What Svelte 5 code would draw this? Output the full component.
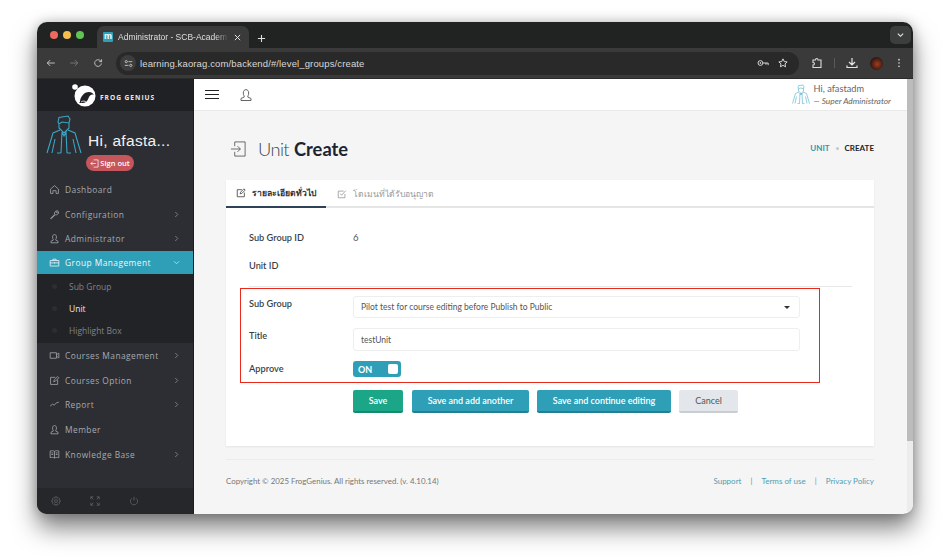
<script>
  const nav = [
    { label: "Dashboard", icon: "home" },
    { label: "Configuration", icon: "wrench", arrow: true },
    { label: "Administrator", icon: "user", arrow: true },
    { label: "Group Management", icon: "case", open: true },
    { label: "Courses Management", icon: "video", arrow: true },
    { label: "Courses Option", icon: "edit", arrow: true },
    { label: "Report", icon: "chart", arrow: true },
    { label: "Member", icon: "user" },
    { label: "Knowledge Base", icon: "book", arrow: true },
  ];
  const subs = ["Sub Group", "Unit", "Highlight Box"];
</script>

{#snippet person(cls)}
  <svg class={cls} viewBox="0 0 36 40" fill="none" stroke="#3aa6c4" stroke-width="1.1">
    <path d="M12 7 L13 2.500 L22 1 L24 4 L23 8 L16 7 L13 9 Z M13 9 V13 L18 18 L23 13 V8" />
    <path d="M14 15 L7 18 L1 38 M22 15 L29 18 L35 38 M16 17 L18 21 L20 17 L21 38 M16 17 L15 38 M9 24 L6 38 M27 24 L30 38 M11 38 H15 M21 38 H25" />
  </svg>
{/snippet}

{#snippet navIcon(name)}
  <svg class="nav-icon" viewBox="0 0 14 14" fill="none" stroke="currentColor" stroke-width="1">
    {#if name === "home"}
      <path d="M2 6.500 7 2l5 4.500V12H9V8.500H5V12H2Z" />
    {:else if name === "wrench"}
      <path d="M2 12 7 6.800C6.400 4.500 8 2 11 2.200L9.300 4.200 10.300 5.200 12.300 3.500C12.600 6.300 10 8 7.900 7.400L3 12.500Z" />
    {:else if name === "user"}
      <path d="M4.500 5c0-4 5-4 5 0 0 2-1 3-1 4l3 1.500V12.500H2.500V10.500L5.500 9c0-1-1-2-1-4Z" />
    {:else if name === "case"}
      <path d="M1.500 4.500H12.500V11.500H1.500ZM5 4.500V2.800H9V4.500M1.500 7.500H12.500M7 6.800V8.200" />
    {:else if name === "video"}
      <path d="M1.500 3.500H9.500V10.500H1.500ZM9.500 6 12.500 4V10L9.500 8" />
    {:else if name === "edit"}
      <path d="M8 3H2V12H11V6M6 8.500 6.500 6.500 11 2 12.500 3.500 8 8Z" />
    {:else if name === "chart"}
      <path d="M1.500 9 4.500 6.500 6.500 7.800 9.500 5 12.500 4" />
    {:else}
      <path d="M1.500 2.500C3.500 2 5.500 2 7 3 8.500 2 10.500 2 12.500 2.500V11C10.500 10.500 8.500 10.500 7 11.500 5.500 10.500 3.500 10.500 1.500 11ZM7 3V11.500M3 5H5.500M3 7H5.500M8.500 5H11M8.500 7H11" />
    {/if}
  </svg>
{/snippet}

{#snippet navRow(item)}
  <div class="nav-row" class:active={item.open}>
    {@render navIcon(item.icon)}
    <span class="nav-label">{item.label}</span>
    {#if item.arrow}
      <svg class="chev" viewBox="0 0 6 8" fill="none" stroke="currentColor"><path d="M1.500 1 4.500 4 1.500 7" /></svg>
    {:else if item.open}
      <svg class="chev" viewBox="0 0 8 6" fill="none" stroke="currentColor"><path d="M1 1.500 4 4.500 7 1.500" /></svg>
    {/if}
  </div>
{/snippet}

<div class="page">
  <div class="window">
    <div class="tabstrip">
      <div class="lights">
        <i class="red"></i><i class="yellow"></i><i class="green"></i>
      </div>
      <div class="tab">
        <span class="favicon">m</span>
        <span class="tab-title">Administrator - SCB-Academ</span>
        <svg class="tab-x" viewBox="0 0 8 8" stroke="#e8e8e8" stroke-width="1.100"><path d="M1 1 7 7M7 1 1 7" /></svg>
      </div>
      <svg class="tab-plus" viewBox="0 0 10 10" stroke="#e0e0e0" stroke-width="1.200"><path d="M5 1V9M1 5H9" /></svg>
      <div class="tab-menu">
        <svg viewBox="0 0 8 6" fill="none" stroke="#e8e8e8" stroke-width="1.300"><path d="M1 1.500 4 4.500 7 1.500" /></svg>
      </div>
    </div>

    <div class="toolbar">
      <svg class="tool" viewBox="0 0 12 12" fill="none" stroke="#c8c8c8" stroke-width="1.100"><path d="M10.500 6H1.500M5 2.500 1.500 6 5 9.500" /></svg>
      <svg class="tool fwd" viewBox="0 0 12 12" fill="none" stroke="#7c7c7c" stroke-width="1.100"><path d="M1.500 6H10.500M7 2.500 10.500 6 7 9.500" /></svg>
      <svg class="tool" viewBox="0 0 12 12" fill="none" stroke="#c8c8c8" stroke-width="1.100"><path d="M10 6.500A4 4 0 1 1 8.800 3.200L10.300 4.400M10.300 1.500V4.400H7.500" /></svg>
      <div class="omnibox">
        <span class="tune">
          <svg viewBox="0 0 12 12" fill="none" stroke="#dcdcdc"><circle cx="3" cy="3.500" r="1.500" /><path d="M6 3.500H11M1 8.500H6" /><circle cx="9" cy="8.500" r="1.500" /></svg>
        </span>
        <span class="url">learning.kaorag.com/backend/#/level_groups/create</span>
        <svg class="omni-icon key" viewBox="0 0 14 10" fill="none" stroke="#dcdcdc" stroke-width="1.100"><circle cx="4" cy="5" r="2.800" /><circle cx="4" cy="5" r=".6" /><path d="M6.800 5H13V7.500M10.500 5V7" /></svg>
        <svg class="omni-icon" viewBox="0 0 12 12" fill="none" stroke="#e4e4e4" stroke-width="1.100"><path d="M6 1 7.500 4.300 11 4.700 8.400 7 9.100 10.600 6 8.800 2.900 10.600 3.600 7 1 4.700 4.500 4.300Z" /></svg>
      </div>
      <svg class="tool ext" viewBox="0 0 12 12" fill="none" stroke="#dcdcdc" stroke-width="1.100"><path d="M2 3H4.500C4.500 1 7 1 7 3H10V10.500H2V8C4 8 4 5.500 2 5.500Z" /></svg>
      <span class="tool-sep"></span>
      <svg class="tool dl" viewBox="0 0 12 12" fill="none" stroke="#e4e4e4" stroke-width="1.200"><path d="M6 1V7.500M3 5 6 8 9 5M1 8.500V10.500H11V8.500" /></svg>
      <span class="avatar"></span>
      <svg class="tool dots" viewBox="0 0 4 12" fill="#dcdcdc"><circle cx="2" cy="2" r="1" /><circle cx="2" cy="6" r="1" /><circle cx="2" cy="10" r="1" /></svg>
    </div>

    <div class="app">
      <aside class="sidebar">
        <div class="brand">
          <svg class="frog" viewBox="0 0 26 26">
            <circle cx="4" cy="5" r="2.800" fill="#fff" />
            <circle cx="14" cy="14" r="10.500" fill="#fff" />
            <path d="M9 20C9 15 13 10 18 10 20 10 22 11 23 13 21 12 19 13 18 15 17 18 15 21 12 21H8Z" fill="#1f2125" />
            <path d="M10 20C12 18.500 14 19 15 20" fill="none" stroke="#fff" stroke-width=".8" />
          </svg>
          <span class="brand-name">FROG GENIUS</span>
        </div>

        <div class="profile">
          {@render person("profile-pic")}
          <div class="profile-text">
            <div class="hi">Hi, afasta...</div>
            <div class="signout">
              <svg viewBox="0 0 10 10" fill="none" stroke="#fff" stroke-width=".8"><path d="M4 1H9V9H4M6.500 5H1M3 3 1 5 3 7" /></svg>
              Sign out
            </div>
          </div>
        </div>

        <nav class="nav">
          {#each nav as item}
            {@render navRow(item)}
            {#if item.open}
              <div class="subnav">
                {#each subs as sub}
                  <div class="sub-row" class:current={sub === "Unit"}>
                    <i></i>{sub}
                  </div>
                {/each}
              </div>
            {/if}
          {/each}
        </nav>

        <div class="side-foot">
          <svg viewBox="0 0 12 12" fill="none" stroke="#5d6066"><circle cx="6" cy="6" r="1.800" /><path d="M5 1H7L7.400 2.500 8.800 1.900 10.100 3.200 9.500 4.600 11 5V7L9.500 7.400 10.100 8.800 8.800 10.100 7.400 9.500 7 11H5L4.600 9.500 3.200 10.100 1.900 8.800 2.500 7.400 1 7V5L2.500 4.600 1.900 3.200 3.200 1.900 4.600 2.500Z" /></svg>
          <svg viewBox="0 0 12 12" fill="none" stroke="#5d6066"><path d="M1 4V1H4M8 1H11V4M11 8V11H8M4 11H1V8M1 1 4 4M11 1 8 4M11 11 8 8M1 11 4 8" /></svg>
          <svg viewBox="0 0 12 12" fill="none" stroke="#5d6066"><path d="M6 1V5.500M3.500 2.800A4.300 4.300 0 1 0 8.500 2.800" /></svg>
        </div>
      </aside>

      <div class="main">
        <div class="column">
          <header class="topbar">
            <div class="burger"><i></i><i></i><i></i></div>
            <svg class="top-user" viewBox="0 0 14 14" fill="none" stroke="#555" stroke-width=".9"><path d="M4.300 5c0-4.500 5.400-4.500 5.400 0 0 2-1 3-1 4l3.300 1.500V12.500H2V10.500L5.300 9c0-1-1-2-1-4Z" /></svg>
            <div class="top-right">
              {@render person("top-pic")}
              <div>
                <div class="top-name">Hi, afastadm</div>
                <div class="top-role">— Super Administrator</div>
              </div>
            </div>
          </header>

          <div class="content">
            <div class="title-row">
              <svg class="title-icon" viewBox="0 0 18 18" fill="none" stroke="#555" stroke-width=".9"><path d="M5 6V1.500H16V16.500H5V12M1 9H11M8 6 11 9 8 12" /></svg>
              <h1><span>Unit</span> <b>Create</b></h1>
              <div class="crumbs"><span class="link">UNIT</span><i></i><span>CREATE</span></div>
            </div>

            <section class="card">
              <div class="tabs">
                <div class="form-tab on">
                  <svg viewBox="0 0 12 12" fill="none" stroke="#444"><path d="M7 2H1.500V10.500H10V5.500M5 7 5.500 5 9.500 1 11 2.500 7 6.500Z" /></svg>
                  รายละเอียดทั่วไป
                </div>
                <div class="form-tab">
                  <svg viewBox="0 0 12 12" fill="none" stroke="#999"><path d="M9.500 6V10.500H1.500V2.500H8M3.800 5.500 5.500 7.500 10.500 2" /></svg>
                  โดเมนที่ได้รับอนุญาต
                </div>
              </div>

              <div class="form">
                <div class="static"><label>Sub Group ID</label><span>6</span></div>
                <div class="static"><label>Unit ID</label><span></span></div>
                <hr />
                <div class="marked">
                  <div class="field">
                    <label>Sub Group</label>
                    <div class="control select">
                      <span>Pilot test for course editing before Publish to Public</span>
                      <i class="caret"></i>
                    </div>
                  </div>
                  <div class="field">
                    <label>Title</label>
                    <div class="control">testUnit</div>
                  </div>
                  <div class="field toggle-field">
                    <label>Approve</label>
                    <div class="toggle"><span>ON</span><i></i></div>
                  </div>
                </div>
                <div class="actions">
                  <button class="btn green">Save</button>
                  <button class="btn teal add">Save and add another</button>
                  <button class="btn teal cont">Save and continue editing</button>
                  <button class="btn grey">Cancel</button>
                </div>
              </div>
            </section>

            <footer class="foot">
              <span>Copyright © 2025 FrogGenius. All rights reserved. (v. 4.10.14)</span>
              <div class="foot-links">
                <a href="#support">Support</a><em>|</em><a href="#terms">Terms of use</a><em>|</em><a href="#privacy">Privacy Policy</a>
              </div>
            </footer>
          </div>
        </div>
        <div class="scrollbar"><i></i></div>
      </div>
    </div>
  </div>
</div>

<style>
  :global(body) {
    margin: 0;
    background: #fff;
  }

  .page {
    box-sizing: border-box;
    height: 560px;
    padding: 22px 0 0 37px;
    overflow: hidden;
  }

  .window {
    box-sizing: border-box;
    width: 876px;
    height: 492px;
    display: flex;
    flex-direction: column;
    overflow: hidden;
    border-radius: 10px;
    background: #f5f5f5;
    box-shadow: 0 14px 24px rgba(0, 0, 0, 0.5), 0 0 12px rgba(0, 0, 0, 0.22);
    font-family: Lato, "Noto Sans", sans-serif;
  }

  /* browser chrome */
  .tabstrip {
    height: 26px;
    flex: none;
    display: flex;
    align-items: flex-end;
    background: #212323;
  }
  .lights {
    display: flex;
    gap: 5px;
    align-self: flex-start;
    margin: 9px 0 0 13px;
  }
  .lights i {
    width: 8px;
    height: 8px;
    border-radius: 50%;
  }
  .red { background: #ee6a5f; }
  .yellow { background: #f5bd4f; }
  .green { background: #61c454; }
  .tab {
    width: 152px;
    height: 22px;
    margin-left: 13px;
    box-sizing: border-box;
    padding: 0 6px;
    display: flex;
    align-items: center;
    gap: 5px;
    background: #3a3a3a;
    border-radius: 7px 7px 0 0;
    color: #dfdfdf;
    font: 8.5px "Liberation Sans", sans-serif;
  }
  .favicon {
    flex: none;
    width: 10px;
    height: 10px;
    border-radius: 1px;
    background: #2e9fb7;
    color: #fff;
    font: bold 9px/9px "Liberation Sans", sans-serif;
    text-align: center;
  }
  .tab-title {
    flex: 1;
    white-space: nowrap;
    mask-image: linear-gradient(to right, #000 88%, transparent);
  }
  .tab-x {
    flex: none;
    width: 7px;
    height: 7px;
    margin-right: 2px;
  }
  .tab-plus {
    width: 9px;
    height: 9px;
    margin: 0 0 5px 8px;
  }
  .tab-menu {
    margin: 0 2px 4px auto;
    width: 21px;
    height: 18px;
    display: flex;
    align-items: center;
    justify-content: center;
    border-radius: 5px;
    background: #3c3d3d;
  }
  .tab-menu svg { width: 7px; height: 6px; }

  .toolbar {
    height: 31px;
    flex: none;
    display: flex;
    align-items: center;
    background: #3a3a3a;
    padding-left: 9px;
    border-bottom: 1px solid #2b2b2b;
    box-sizing: border-box;
  }
  .tool {
    width: 10px;
    height: 10px;
    flex: none;
    margin-right: 13px;
  }
  .tool.fwd { margin-right: 14px; }
  .omnibox {
    width: 683px;
    height: 23px;
    flex: none;
    display: flex;
    align-items: center;
    background: #292929;
    border-radius: 12px;
    box-sizing: border-box;
    padding: 0 11px 0 4px;
  }
  .tune {
    width: 16px;
    height: 16px;
    border-radius: 50%;
    background: #3d3d3d;
    display: flex;
    align-items: center;
    justify-content: center;
    margin-right: 4px;
  }
  .tune svg { width: 9px; height: 9px; }
  .url {
    flex: 1;
    color: #d8d8d8;
    font: 9.5px "Liberation Sans", sans-serif;
    letter-spacing: 0.13px;
  }
  .omni-icon {
    width: 10px;
    height: 10px;
    margin-left: 9px;
  }
  .omni-icon.key { width: 12px; }
  .tool.ext {
    width: 12px;
    height: 12px;
    margin: 0 11px 0 12px;
  }
  .tool-sep {
    width: 1px;
    height: 10px;
    background: #5a5a5a;
    margin-right: 11px;
  }
  .tool.dl {
    width: 12px;
    height: 12px;
    margin-right: 12px;
  }
  .avatar {
    width: 13px;
    height: 13px;
    flex: none;
    border-radius: 50%;
    background: radial-gradient(circle at 55% 55%, #a33c1c, #2a1613 70%);
    margin-right: 14px;
  }
  .tool.dots { width: 4px; margin: 0; }

  /* application */
  .app {
    flex: 1;
    display: flex;
    min-height: 0;
  }
  .sidebar {
    width: 157px;
    flex: none;
    box-sizing: border-box;
    display: flex;
    flex-direction: column;
    background: #2c2e33;
    border-right: 1px solid #1b1c1f;
    font-family: "Open Sans", sans-serif;
  }
  .brand {
    height: 32px;
    flex: none;
    display: flex;
    align-items: center;
    padding-left: 34px;
    background: #1f2125;
    gap: 3px;
  }
  .frog { width: 26px; height: 26px; }
  .brand-name {
    color: #e8e8e8;
    font: bold 6.6px "Open Sans", sans-serif;
    letter-spacing: 0.98px;
    margin-top: 5px;
  }
  .profile {
    height: 66px;
    flex: none;
    box-sizing: border-box;
    display: flex;
    padding: 4px 0 0 9px;
    gap: 6px;
  }
  .profile-pic {
    width: 36px;
    height: 40px;
    flex: none;
  }
  .profile-text { padding-top: 16px; }
  .hi {
    color: #f2f2f2;
    font: 15.5px/20px "Liberation Sans", sans-serif;
    white-space: nowrap;
    letter-spacing: 0.3px;
  }
  .signout {
    width: 48px;
    height: 16px;
    margin: 4px 0 0 -2px;
    display: flex;
    align-items: center;
    justify-content: center;
    gap: 1px;
    border-radius: 8px;
    background: #c5565b;
    color: #fff;
    font: 600 7.5px "Open Sans", sans-serif;
    white-space: nowrap;
  }
  .signout svg { width: 9px; height: 9px; }
  .nav { flex: 1; }
  .nav-row {
    height: 24.700px;
    display: flex;
    align-items: center;
    padding: 0 10px 0 12px;
    color: #a7aab0;
    font-size: 8.400px;
    letter-spacing: 0.45px;
  }
  .nav-row.active {
    background: #2f9fb8;
    color: #f2f6f8;
    height: 23px;
  }
  .nav-icon {
    width: 11px;
    height: 11px;
    flex: none;
    margin-right: 5px;
  }
  .nav-label { flex: 1; white-space: nowrap; }
  .chev {
    width: 5px;
    height: 7px;
    margin-right: 4px;
    opacity: 0.75;
  }
  .active .chev { width: 7px; height: 5px; margin-right: 3px; }
  .subnav {
    background: #212327;
    padding-top: 1px;
    height: 69px;
    box-sizing: border-box;
  }
  .sub-row {
    height: 22px;
    display: flex;
    align-items: center;
    color: #80848a;
    font-size: 8.500px;
    padding-left: 15px;
  }
  .sub-row i {
    width: 5px;
    height: 5px;
    border-radius: 50%;
    background: #2c2e33;
    margin-right: 12px;
  }
  .sub-row.current { color: #e8e8e8; }
  .side-foot {
    height: 26px;
    flex: none;
    display: flex;
    align-items: center;
    gap: 29px;
    padding-left: 14px;
    background: #25272b;
  }
  .side-foot svg { width: 10px; height: 10px; }

  .main {
    flex: 1;
    min-width: 0;
    display: flex;
  }
  .column {
    flex: 1;
    min-width: 0;
    display: flex;
    flex-direction: column;
  }
  .scrollbar {
    width: 6px;
    flex: none;
    background: #ececec;
  }
  .scrollbar i {
    display: block;
    height: 362px;
    background: #bcbcbc;
  }
  .topbar {
    height: 32px;
    flex: none;
    display: flex;
    align-items: center;
    background: #fff;
    border-bottom: 1px solid #e9e9e9;
    box-sizing: border-box;
    padding: 0 16px 0 11px;
  }
  .burger {
    width: 14px;
    display: flex;
    flex-direction: column;
    gap: 2.500px;
  }
  .burger i { height: 1.500px; background: #222; }
  .top-user {
    width: 14px;
    height: 14px;
    margin-left: 20px;
  }
  .top-right {
    margin-left: auto;
    display: flex;
    align-items: center;
    gap: 4px;
    color: #666;
  }
  .top-pic { width: 18px; height: 21px; }
  .top-name { font-size: 9.200px; line-height: 12px; }
  .top-role { font-size: 8.400px; font-style: italic; line-height: 12px; }

  .content {
    flex: 1;
    min-height: 0;
    padding: 0 33px 0 32px;
  }
  .title-row {
    height: 69px;
    display: flex;
    align-items: center;
    padding-top: 7px;
    box-sizing: border-box;
  }
  .title-icon {
    width: 17px;
    height: 18px;
    margin: 0 11px 0 4px;
  }
  h1 {
    margin: 0;
    font-size: 18.300px;
    font-weight: 300;
    color: #3a4450;
  }
  h1 span { letter-spacing: -0.6px; }
  h1 b { font-weight: 700; color: #1b2433; }
  .crumbs {
    margin: 0 0 2px auto;
    display: flex;
    align-items: center;
    font-size: 8px;
    font-weight: 700;
    color: #222;
    gap: 6px;
  }
  .crumbs .link { color: #2f97b0; }
  .crumbs i {
    width: 3px;
    height: 3px;
    border-radius: 50%;
    background: #c8c8c8;
  }

  .card {
    height: 266px;
    background: #fff;
    box-shadow: 0 1px 2px rgba(0, 0, 0, 0.07);
  }
  .tabs {
    height: 28px;
    display: flex;
    box-sizing: border-box;
    border-bottom: 2px solid #e5e5e5;
  }
  .form-tab {
    height: 28px;
    box-sizing: border-box;
    display: flex;
    align-items: center;
    gap: 6px;
    padding: 0 11px;
    color: #999;
    font: 8.600px "Noto Sans", "DejaVu Sans", sans-serif;
    white-space: nowrap;
  }
  .form-tab.on {
    width: 100px;
    padding: 0 10px;
    color: #333;
    font-weight: 700;
    border-bottom: 2px solid #2f4358;
  }
  .form-tab svg { width: 10px; height: 10px; flex: none; }

  .form {
    padding: 15px 22px 0 14px;
    color: #333;
    font-size: 9.500px;
  }
  label {
    display: block;
    width: 104px;
    flex: none;
    font-weight: 600;
    color: #3a3f47;
    font-size: 9.200px;
  }
  .static {
    height: 28px;
    display: flex;
    align-items: center;
    padding-left: 9px;
    color: #555;
  }
  hr {
    margin: 7px 0 0 9px;
    border: 0;
    border-top: 1px solid #e8e8e8;
  }
  .marked {
    margin-top: 1px;
    width: 580px;
    height: 95px;
    box-sizing: border-box;
    border: 1.500px solid #e8291c;
    padding: 7px 0 0 8px;
  }
  .field {
    display: flex;
    margin-bottom: 10px;
  }
  .field label { padding-top: 2px; }
  .control {
    width: 447px;
    height: 23px;
    box-sizing: border-box;
    display: flex;
    align-items: center;
    padding: 0 7px;
    border: 1px solid #eeeeee;
    border-radius: 3px;
    color: #555;
    font-size: 8.500px;
  }
  .select { height: 22px; justify-content: space-between; padding-right: 9px; }
  .caret {
    border: 3px solid transparent;
    border-top: 3.500px solid #333;
    border-bottom: 0;
  }
  .toggle-field { align-items: center; }
  .toggle-field label { padding: 0 0 2px; }
  .toggle {
    width: 48px;
    height: 16px;
    box-sizing: border-box;
    display: flex;
    align-items: center;
    justify-content: space-between;
    padding: 0 3px 0 5px;
    border-radius: 3px;
    background: #2f9fb8;
    color: #fff;
    font-size: 9px;
    font-weight: 700;
  }
  .toggle i {
    width: 10px;
    height: 10px;
    border-radius: 2px;
    background: #fff;
  }
  .actions {
    display: flex;
    margin: 7px 0 0 113px;
    gap: 8px;
  }
  .btn {
    height: 23px;
    padding: 0;
    border: 0;
    border-bottom: 2px solid;
    border-radius: 2px;
    color: #fff;
    font: 600 9px Lato, sans-serif;
    box-sizing: border-box;
  }
  .btn.green { width: 50px; background: #1aa687; border-color: #148a70; margin-right: 1px; }
  .btn.teal { background: #2f9fb8; border-color: #257f94; }
  .btn.add { width: 117px; }
  .btn.cont { width: 134px; }
  .btn.grey { width: 59px; background: #e3e6ea; border-color: #c9ccd0; color: #555; font-weight: 400; }

  .foot {
    margin-top: 13px;
    padding-top: 16px;
    border-top: 1px solid #ececec;
    display: flex;
    justify-content: space-between;
    color: #777;
    font-size: 7.900px;
  }
  .foot-links { font-size: 8px; }
  .foot-links a { color: #4f9db2; text-decoration: none; }
  .foot-links em { font-style: normal; margin: 0 9px; color: #888; }
</style>
